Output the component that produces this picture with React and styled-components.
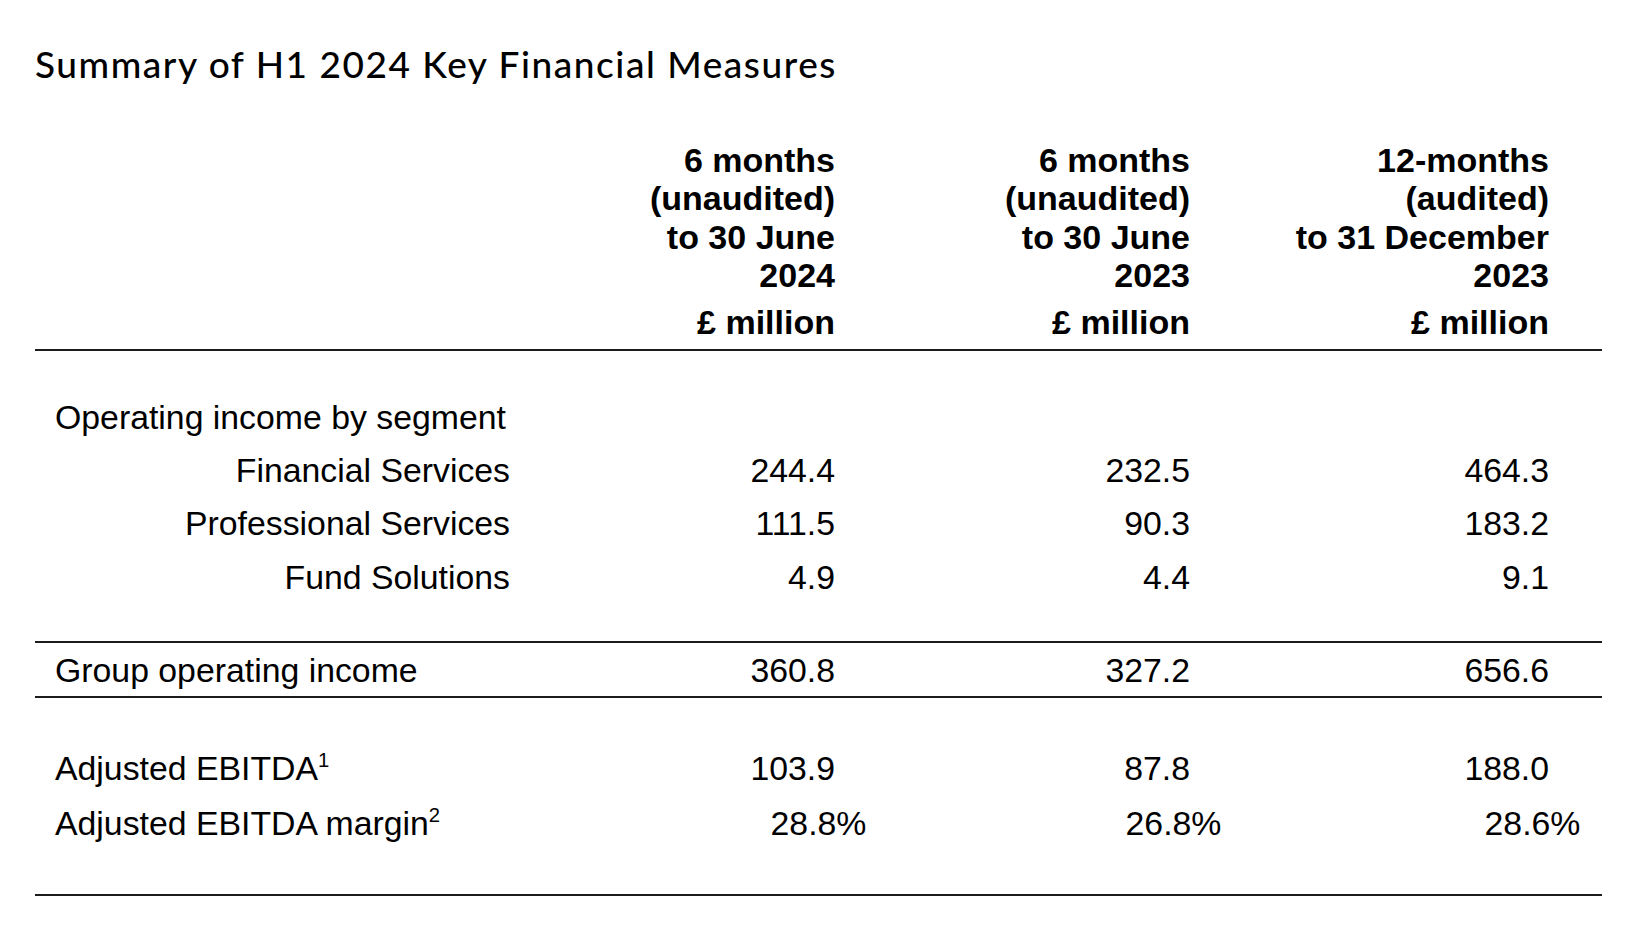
import React from 'react';
import styled, { createGlobalStyle } from 'styled-components';

const GlobalStyle = createGlobalStyle`
  html, body {
    margin: 0;
    padding: 0;
    background: #fff;
  }
`;

const columns = `
  display: grid;
  grid-template-columns: 475px 325px 355px 359px 1fr;
`;

const Page = styled.div`
  padding: 42px 0 0 35px;
  color: #000;
`;

const Title = styled.h1`
  margin: 0;
  font-family: Lato, "Open Sans", sans-serif;
  font-weight: 500;
  font-size: 37px;
  line-height: 44px;
  letter-spacing: 1.55px;
`;

const Table = styled.div`
  margin-top: 54.5px;
  width: 1567px;
  font-family: "Liberation Sans", Arial, sans-serif;
`;

const HeaderRow = styled.div`
  ${columns}
  padding-bottom: 7.5px;
  border-bottom: 2px solid #1c1c1c;
`;

const HeadCell = styled.div`
  grid-column: ${p => p.$col};
  text-align: right;
  font-weight: 700;
  font-size: 34px;
  line-height: 38.5px;
  white-space: nowrap;
`;

const Unit = styled.div`
  margin-top: 8px;
`;

const Section = styled.div`
  padding: ${p => p.$pad};
  border-bottom: 2px solid #1c1c1c;
`;

const Row = styled.div`
  ${columns}
  height: ${p => p.$h}px;
  line-height: ${p => p.$h}px;
  font-size: 33.8px;
  white-space: nowrap;
`;

const Label = styled.div`
  padding-left: ${p => (p.$indent ? 0 : 20)}px;
  text-align: ${p => (p.$indent ? 'right' : 'left')};
`;

const Value = styled.div`
  text-align: right;
`;

const Pct = styled.span`
  margin-right: -0.93em;
`;

const Sup = styled.sup`
  font-size: 0.6em;
  line-height: 0;
  vertical-align: 0.62em;
`;

const headers = [
  ['6 months', '(unaudited)', 'to 30 June', '2024'],
  ['6 months', '(unaudited)', 'to 30 June', '2023'],
  ['12-months', '(audited)', 'to 31 December', '2023'],
];

const segments = [
  ['Financial Services', '244.4', '232.5', '464.3'],
  ['Professional Services', '111.5', '90.3', '183.2'],
  ['Fund Solutions', '4.9', '4.4', '9.1'],
];

export default function App() {
  return (
    <Page>
      <GlobalStyle />
      <Title>Summary of H1 2024 Key Financial Measures</Title>
      <Table>
        <HeaderRow>
          {headers.map((lines, i) => (
            <HeadCell key={i} $col={i + 2}>
              {lines.map(l => <div key={l}>{l}</div>)}
              <Unit>£ million</Unit>
            </HeadCell>
          ))}
        </HeaderRow>

        <Section $pad="40.5px 0 37px">
          <Row $h={53.2}>
            <Label>Operating income by segment</Label>
          </Row>
          {segments.map(([name, ...vals]) => (
            <Row key={name} $h={53.2}>
              <Label $indent>{name}</Label>
              {vals.map((v, i) => <Value key={i}>{v}</Value>)}
            </Row>
          ))}
        </Section>

        <Section $pad="2px 0 0">
          <Row $h={51}>
            <Label>Group operating income</Label>
            <Value>360.8</Value>
            <Value>327.2</Value>
            <Value>656.6</Value>
          </Row>
        </Section>

        <Section $pad="43px 0">
          <Row $h={55}>
            <Label>Adjusted EBITDA<Sup>1</Sup></Label>
            <Value>103.9</Value>
            <Value>87.8</Value>
            <Value>188.0</Value>
          </Row>
          <Row $h={55}>
            <Label>Adjusted EBITDA margin<Sup>2</Sup></Label>
            {['28.8', '26.8', '28.6'].map(v => (
              <Value key={v}>{v}<Pct>%</Pct></Value>
            ))}
          </Row>
        </Section>
      </Table>
    </Page>
  );
}
